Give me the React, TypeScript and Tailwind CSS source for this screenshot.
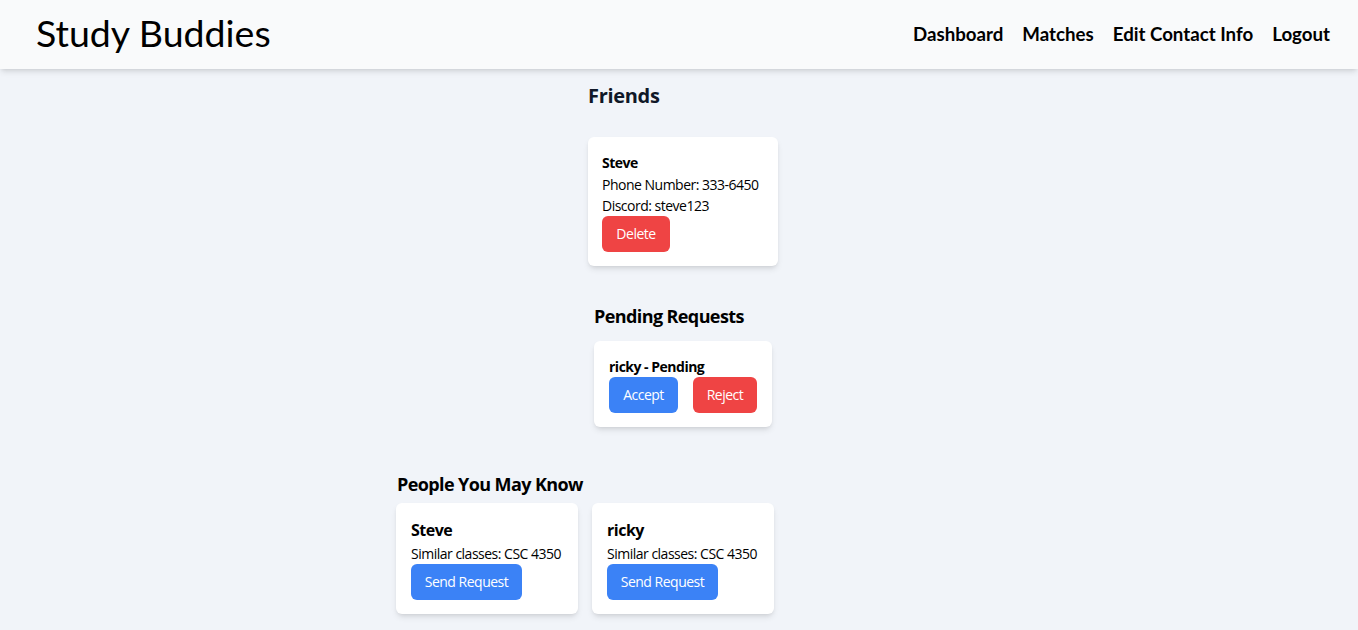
import React from 'react';

const body = "font-['Segoe_UI','Open_Sans',sans-serif]";

const Header: React.FC = () => (
  <header className="h-[69px] bg-[#f9fafb] shadow-md flex items-center justify-between pl-9 pr-7 font-['Lato',sans-serif] text-black">
    <h1 className="text-[37.5px] leading-none pb-[4px]">Study Buddies</h1>
    <nav className="flex items-center gap-[19px] text-[18.7px] font-bold pb-[1px]">
      <a href="#">Dashboard</a>
      <a href="#">Matches</a>
      <a href="#">Edit Contact Info</a>
      <a href="#">Logout</a>
    </nav>
  </header>
);

const App: React.FC = () => {
  const people = [
    { name: 'Steve', classes: 'CSC 4350' },
    { name: 'ricky', classes: 'CSC 4350' },
  ];

  return (
    <div className={`min-h-screen bg-[#f1f4f9] text-black whitespace-nowrap ${body}`}>
      <Header />

      <main className="flex flex-col items-center pl-2 pb-4">
        {/* Friends */}
        <section className="mt-[13px]">
          <h2 className="text-xl leading-7 font-bold text-gray-900 tracking-[-0.3px]">Friends</h2>
          <div className="mt-[27px] w-[190px] bg-white rounded-md shadow-md pt-4 pb-3.5 px-3.5 text-sm tracking-[-0.5px]">
            <p className="font-bold leading-5">Steve</p>
            <p className="leading-[21px] mt-px">Phone Number: 333-6450</p>
            <p className="leading-[21px]">Discord: steve123</p>
            <button className="h-9 w-[68px] rounded-md bg-[#ef4444] text-white">Delete</button>
          </div>
        </section>

        {/* Pending */}
        <section className="mt-9">
          <h2 className="text-lg leading-7 font-bold tracking-[-0.6px]">Pending Requests</h2>
          <div className="mt-[11px] w-[178px] bg-white rounded-md shadow-md pt-4 pb-3.5 px-[15px] text-sm tracking-[-0.5px]">
            <p className="font-bold leading-5">ricky - Pending</p>
            <div className="flex gap-[15px]">
              <button className="h-9 w-[69px] rounded-md bg-[#3b82f6] text-white">Accept</button>
              <button className="h-9 w-[64px] rounded-md bg-[#ef4444] text-white">Reject</button>
            </div>
          </div>
        </section>

        {/* Suggestions */}
        <section className="mt-[43px]">
          <h2 className="text-lg leading-7 font-bold pl-px tracking-[-0.6px]">People You May Know</h2>
          <div className="mt-[5px] grid grid-cols-[182px_182px_182px] gap-3.5">
            {people.map((p) => (
              <div key={p.name} className="bg-white rounded-md shadow-md pt-4 pb-3.5 px-[15px] tracking-[-0.5px]">
                <p className="text-base font-bold leading-[22px]">{p.name}</p>
                <p className="text-sm leading-[21px] mt-[2px]">Similar classes: {p.classes}</p>
                <button className="h-9 w-[111px] rounded-md bg-[#3b82f6] text-white text-sm">Send Request</button>
              </div>
            ))}
          </div>
        </section>
      </main>
    </div>
  );
};

export default App;
